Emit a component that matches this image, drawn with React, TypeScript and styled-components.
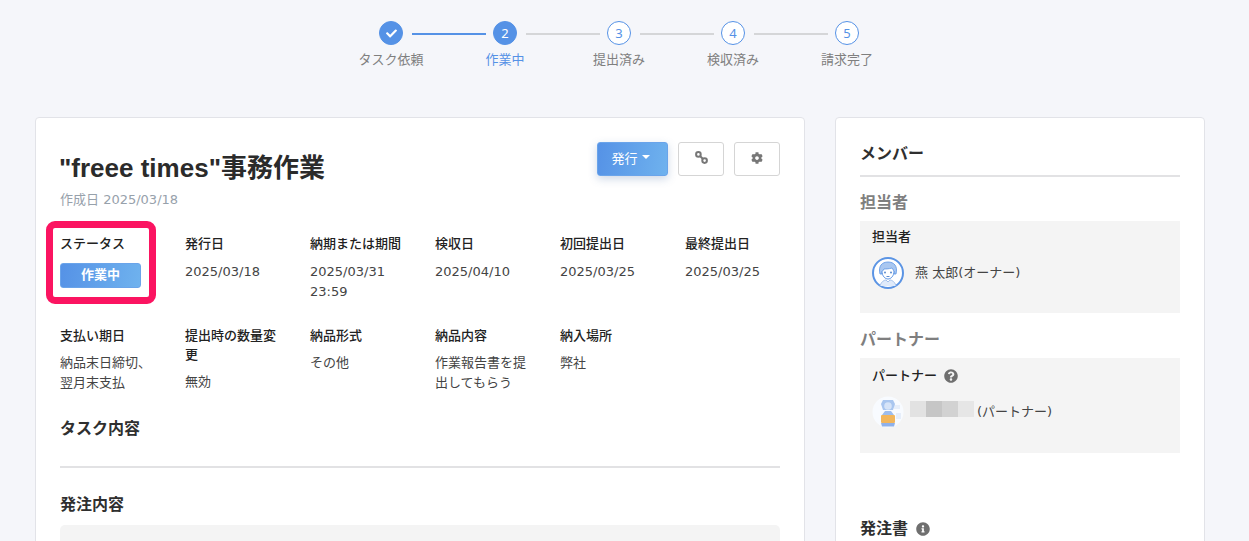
import React from "react";
import styled, { createGlobalStyle } from "styled-components";
import { FaCheck, FaCog, FaInfoCircle, FaQuestionCircle } from "react-icons/fa";

const Global = createGlobalStyle`
  html, body { margin: 0; padding: 0; height: 541px; overflow: hidden; background: #f5f6fa; }
  body { font-family: "DejaVu Sans", "Noto Sans CJK JP", sans-serif; color: #333; }
  * { box-sizing: border-box; }
`;

const Page = styled.div`
  width: 1249px;
  height: 541px;
  overflow: hidden;
`;

const Stepper = styled.ol`
  list-style: none;
  margin: 0;
  padding: 21px 0 0 334px;
  height: 117px;
  display: flex;
`;

const Step = styled.li`
  width: 114px;
  display: flex;
  flex-direction: column;
  align-items: center;
  position: relative;
`;

const Connector = styled.span<{ $done: boolean }>`
  position: absolute;
  left: 78px;
  top: 12px;
  width: 74px;
  height: 2px;
  background: ${(p) => (p.$done ? "#5592e6" : "#d5d6d8")};
`;

const Dot = styled.span<{ $filled: boolean }>`
  width: 24px;
  height: 24px;
  border-radius: 50%;
  border: 1px solid #5592e6;
  background: ${(p) => (p.$filled ? "#5592e6" : "#fff")};
  color: ${(p) => (p.$filled ? "#fff" : "#5592e6")};
  font-family: "Noto Sans", sans-serif;
  font-size: 13px;
  display: flex;
  align-items: center;
  justify-content: center;
`;

const StepLabel = styled.span<{ $active: boolean }>`
  margin-top: 6px;
  font-size: 13px;
  line-height: 18px;
  white-space: nowrap;
  color: ${(p) => (p.$active ? "#5592e6" : "#7f7f7f")};
`;

const Columns = styled.div`
  display: flex;
  align-items: flex-start;
  gap: 30px;
  padding-left: 35px;
`;

const Card = styled.section`
  background: #fff;
  border: 1px solid #e2e3e8;
  border-radius: 4px;
  height: 520px;
`;

const MainCard = styled(Card)`
  width: 770px;
  padding: 24px 24px 0 24px;
  position: relative;
`;

const SideCard = styled(Card)`
  width: 370px;
  padding: 25px 24px 0 24px;
`;

const TitleRow = styled.div`
  display: flex;
  justify-content: space-between;
  align-items: flex-start;
  height: 42px;
`;

const Title = styled.h1`
  margin: 9px 0 0 -1px;
  font-size: 26px;
  line-height: 34px;
  font-weight: 700;
  color: #2b2b2b;
  font-family: "Liberation Sans", "Noto Sans CJK JP", sans-serif;
  white-space: nowrap;
`;

const Actions = styled.div`
  display: flex;
  gap: 10px;
`;

const PrimaryButton = styled.button`
  width: 71px;
  height: 34px;
  border: 1px solid #6aa4ea;
  border-radius: 3px;
  background: linear-gradient(100deg, #5592e6, #6fb2ee);
  box-shadow: 0 3px 8px rgba(60, 100, 160, 0.25);
  color: #fff;
  font: inherit;
  font-size: 13px;
  display: flex;
  align-items: center;
  justify-content: center;
  gap: 4px;
  padding: 0 4px 4px 0;
`;

const Caret = styled.span`
  width: 0;
  height: 0;
  border-left: 4px solid transparent;
  border-right: 4px solid transparent;
  border-top: 4px solid #fff;
`;

const IconButton = styled.button`
  width: 46px;
  height: 34px;
  border: 1px solid #d5d5d5;
  border-radius: 3px;
  background: #fff;
  color: #777;
  padding: 0 0 3px;
  display: flex;
  align-items: center;
  justify-content: center;
`;

const Created = styled.div`
  font-size: 13px;
  line-height: 18px;
  color: #97a1ab;
  margin: 7px 0 25px;
`;

const MetaGrid = styled.dl`
  margin: 0;
  padding: 0;
  display: grid;
  grid-template-columns: repeat(6, 125px);
`;

const MetaItem = styled.div`
  height: 92px;
  padding-right: 30px;
`;

const MetaLabel = styled.dt`
  font-size: 13px;
  line-height: 19px;
  font-weight: 500;
  color: #222;
`;

const MetaValue = styled.dd<{ $gap: number }>`
  margin: ${(p) => p.$gap}px 0 0;
  font-size: 13px;
  line-height: 20px;
  color: #444;
`;

const Status = styled.div`
  margin-top: 10px;
  width: 81px;
  height: 25px;
  border: 1px solid #6aa4ea;
  border-radius: 3px;
  background: linear-gradient(100deg, #5592e6, #6fb2ee);
  color: #fff;
  font-size: 13px;
  font-weight: 700;
  line-height: 22px;
  text-align: center;
`;

const Highlight = styled.div`
  position: absolute;
  left: 10px;
  top: 103px;
  width: 110px;
  height: 83px;
  border: 7px solid #fb1461;
  border-radius: 9px;
  pointer-events: none;
`;

const SectionTitle = styled.h2`
  margin: 0;
  font-size: 16px;
  line-height: 22px;
  font-weight: 700;
  color: #2f2f2f;
`;

const Rule = styled.hr`
  border: 0;
  height: 2px;
  background: #e2e2e4;
  margin: 0;
`;

const TaskRule = styled(Rule)`
  margin-top: 26px;
`;

const OrderHeading = styled(SectionTitle)`
  margin-top: 26px;
`;

const OrderBox = styled.div`
  margin-top: 9px;
  height: 60px;
  border-radius: 5px;
  background: #f4f4f4;
`;

const SideRule = styled(Rule)`
  margin-top: 10px;
`;

const GroupTitle = styled.h3<{ $top: number }>`
  margin: ${(p) => p.$top}px 0 0;
  font-size: 16px;
  line-height: 22px;
  font-weight: 700;
  color: #7f7f7f;
`;

const MemberBox = styled.div<{ $h: number; $top: number }>`
  margin-top: 7px;
  height: ${(p) => p.$h}px;
  background: #f4f4f4;
  padding: ${(p) => p.$top}px 12px 0;
`;

const MemberLabel = styled.div`
  font-size: 13px;
  line-height: 18px;
  font-weight: 500;
  color: #222;
  display: flex;
  align-items: center;
  gap: 7px;
`;

const MemberRow = styled.div<{ $gap: number; $top: number }>`
  margin-top: ${(p) => p.$top}px;
  display: flex;
  align-items: center;
  gap: ${(p) => p.$gap}px;
  font-size: 13px;
  color: #444;
  line-height: 32px;
  height: 32px;
`;

const Redacted = styled.span`
  display: flex;
  position: relative;
  top: -3px;
  width: 64px;
  height: 16px;
  margin-right: -3px;
`;

const Pixel = styled.span<{ $c: string }>`
  flex: 1;
  background: ${(p) => p.$c};
`;

const DocHeading = styled(SectionTitle)`
  margin-top: 65px;
  display: flex;
  align-items: center;
  gap: 8px;
  svg { color: #6f6f6f; }
`;

const HelpGlyph = styled(FaQuestionCircle)`
  color: #6f6f6f;
  font-size: 14px;
`;

const LinkIcon = () => (
  <svg width="13" height="13" viewBox="0 0 13 13" aria-hidden="true" fill="none" stroke="#777" strokeWidth="2">
    <circle cx="3.4" cy="3.4" r="2.3" />
    <circle cx="9.6" cy="9.6" r="2.3" />
    <path d="M5 5 8 8" />
  </svg>
);

const OwnerAvatar = () => (
  <svg width="32" height="32" viewBox="0 0 32 32" aria-hidden="true">
    <circle cx="16" cy="16" r="15" fill="#fff" stroke="#5b94e4" strokeWidth="2" />
    <path d="M8 17C6 9 10 5 16 5s10 4 8 12l-2 0c0-3-1-5-2-6-3 1-7 1-8 1-1 1-2 3-2 5z" fill="#a9c7f0" stroke="#5b94e4" strokeWidth=".8" />
    <path d="M10 14c0 5 3 8 6 8s6-3 6-8" fill="#fff" stroke="#5b94e4" strokeWidth="1" />
    <circle cx="13" cy="15.5" r=".9" fill="#4d7fc8" />
    <circle cx="19" cy="15.5" r=".9" fill="#4d7fc8" />
    <path d="M14.5 19.5h3" stroke="#4d7fc8" strokeWidth=".9" />
    <path d="M8 29c1-4 4-6 6-6l2 2 2-2c2 0 5 2 6 6" fill="#dfeafa" stroke="#8fb3e6" strokeWidth=".8" />
  </svg>
);

const PartnerAvatar = () => (
  <svg width="32" height="32" viewBox="0 0 32 32" aria-hidden="true">
    <circle cx="16" cy="16" r="15.5" fill="#f8fbff" />
    <rect x="22" y="9" width="6" height="4" fill="#e6eefa" />
    <rect x="24" y="17" width="5" height="6" fill="#e6eefa" />
    <path d="M11 4h10l2 4-2 6H11L9 8z" fill="#a9c6ef" />
    <circle cx="16" cy="10" r="3.8" fill="#d6e4f8" />
    <path d="M10 19l3-4h6l3 4v3H10z" fill="#9dbdee" />
    <rect x="9" y="19" width="14" height="8" rx="1" fill="#f2b65c" />
    <path d="M9 27h14l-1 3.5H10z" fill="#8fb1ea" />
  </svg>
);

const steps = ["タスク依頼", "作業中", "提出済み", "検収済み", "請求完了"];

type Meta = { label: string; value?: React.ReactNode };

const row1: Meta[] = [
  { label: "ステータス" },
  { label: "発行日", value: "2025/03/18" },
  { label: "納期または期間", value: <>2025/03/31<br />23:59</> },
  { label: "検収日", value: "2025/04/10" },
  { label: "初回提出日", value: "2025/03/25" },
  { label: "最終提出日", value: "2025/03/25" },
];

const row2: Meta[] = [
  { label: "支払い期日", value: <>納品末日締切、<br />翌月末支払</> },
  { label: "提出時の数量変更", value: "無効" },
  { label: "納品形式", value: "その他" },
  { label: "納品内容", value: "作業報告書を提出してもらう" },
  { label: "納入場所", value: "弊社" },
];

const pixels = ["#e2e2e2", "#c6c6c6", "#d2d2d2", "#e6e6e6"];

export default function App() {
  return (
    <Page>
      <Global />
      <Stepper>
        {steps.map((s, i) => (
          <Step key={s}>
            <Dot $filled={i < 2}>{i === 0 ? <FaCheck size={11} /> : i + 1}</Dot>
            {i < 4 && <Connector $done={i === 0} />}
            <StepLabel $active={i === 1}>{s}</StepLabel>
          </Step>
        ))}
      </Stepper>
      <Columns>
        <MainCard>
          <TitleRow>
            <Title>"freee times"事務作業</Title>
            <Actions>
              <PrimaryButton>発行<Caret /></PrimaryButton>
              <IconButton aria-label="リンク"><LinkIcon /></IconButton>
              <IconButton aria-label="設定"><FaCog size={12} /></IconButton>
            </Actions>
          </TitleRow>
          <Created>作成日 2025/03/18</Created>
          <MetaGrid>
            {row1.map((m) => (
              <MetaItem key={m.label}>
                <MetaLabel>{m.label}</MetaLabel>
                {m.value ? <MetaValue $gap={9}>{m.value}</MetaValue> : <Status>作業中</Status>}
              </MetaItem>
            ))}
            {row2.map((m) => (
              <MetaItem key={m.label}>
                <MetaLabel>{m.label}</MetaLabel>
                <MetaValue $gap={8}>{m.value}</MetaValue>
              </MetaItem>
            ))}
          </MetaGrid>
          <SectionTitle>タスク内容</SectionTitle>
          <TaskRule />
          <OrderHeading>発注内容</OrderHeading>
          <OrderBox />
          <Highlight />
        </MainCard>
        <SideCard>
          <SectionTitle>メンバー</SectionTitle>
          <SideRule />
          <GroupTitle $top={15}>担当者</GroupTitle>
          <MemberBox $h={92} $top={7}>
            <MemberLabel>担当者</MemberLabel>
            <MemberRow $gap={11} $top={11}><OwnerAvatar />燕 太郎(オーナー)</MemberRow>
          </MemberBox>
          <GroupTitle $top={16}>パートナー</GroupTitle>
          <MemberBox $h={95} $top={9}>
            <MemberLabel>パートナー<HelpGlyph /></MemberLabel>
            <MemberRow $gap={6} $top={11}>
              <PartnerAvatar />
              <Redacted>{pixels.map((c, i) => <Pixel key={i} $c={c} />)}</Redacted>
              (パートナー)
            </MemberRow>
          </MemberBox>
          <DocHeading>発注書<FaInfoCircle size={14} /></DocHeading>
        </SideCard>
      </Columns>
    </Page>
  );
}
